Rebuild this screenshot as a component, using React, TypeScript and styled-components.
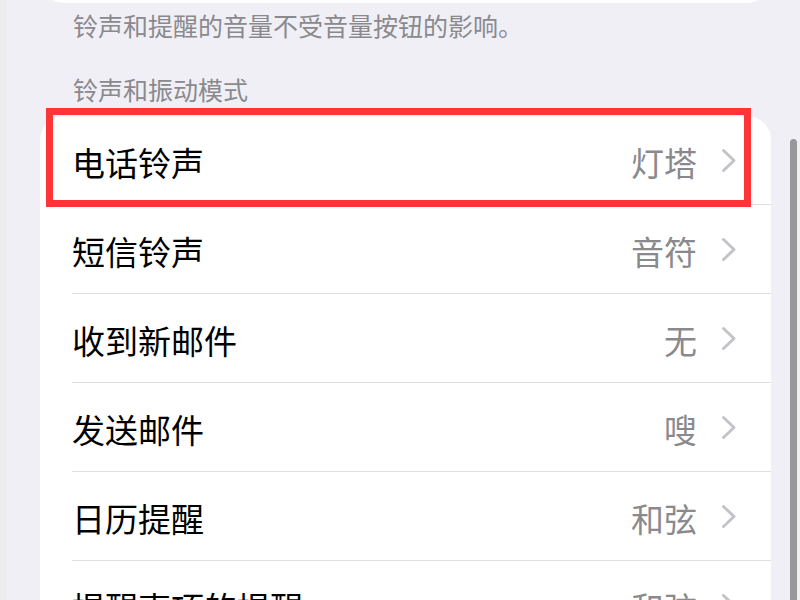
import styled, { createGlobalStyle } from "styled-components"

const GlobalStyle = createGlobalStyle`
  html, body {
    margin     : 0 ;
    padding    : 0 ;
    background : #f0eff5 ;
  }
  body {
    font-family : "Noto Sans CJK SC", "Noto Sans", sans-serif ;
  }
`

const Page = styled.div`
  width      : 800px    ;
  height     : 600px    ;
  display    : flex     ;
  overflow   : hidden   ;
  background : #f0eff5  ;
`

const EdgeStrip = styled.div`
  width      : 7px      ;
  flex       : none     ;
  background : #ededef  ;
`

const Main = styled.div`
  width          : 764px   ;
  flex           : none    ;
  padding-left   : 33px    ;
  box-sizing     : border-box ;
  display        : block   ;
`

const TopCard = styled.div`
  height        : 60px   ;
  margin-top    : -57px  ;
  background    : #ffffff ;
  border-radius : 0 0 24px 24px ;
`

const FooterText = styled.div`
  margin-top   : 6px     ;
  padding-left : 33px    ;
  font-size    : 25px    ;
  line-height  : 32px    ;
  color        : #8a8a8e ;
`

const SectionHeader = styled.div`
  margin-top   : 32px    ;
  padding-left : 33px    ;
  font-size    : 25px    ;
  line-height  : 32px    ;
  color        : #8a8a8e ;
`

const Card = styled.div`
  margin-top    : 11px    ;
  background    : #ffffff ;
  border-radius : 24px 24px 0 0 ;
`

const Row = styled.div`
  position     : relative ;
  padding-left : 32px     ;
`

const RowBody = styled.div`
  height          : 88px    ;
  padding-right   : 34px    ;
  border-bottom   : 1px solid #dedee2 ;
  display         : flex    ;
  align-items     : center  ;
  justify-content : space-between ;
`

const Label = styled.span`
  font-size   : 33px    ;
  line-height : 40px    ;
  margin-top  : 3px     ;
  color       : #000000 ;
`

const Detail = styled.div`
  display     : flex   ;
  align-items : center ;
  gap         : 24px   ;
`

const Value = styled.span`
  font-size   : 33px    ;
  line-height : 40px    ;
  margin-top  : 3px     ;
  color       : #8a8a8e ;
`

const Highlight = styled.div`
  position   : absolute ;
  top        : -8px     ;
  left       : 6px      ;
  right      : 20px     ;
  bottom     : -2px     ;
  border     : 7px solid #fd3438 ;
  pointer-events : none ;
`

const ScrollTrack = styled.div`
  flex         : 1     ;
  padding-left : 19px  ;
  padding-top  : 139px ;
`

const ScrollThumb = styled.div`
  width         : 7px     ;
  height        : 500px   ;
  border-radius : 4px     ;
  background    : #98989b ;
`

const Chevron = () => (
  <svg width="16" height="25" viewBox="0 0 16 25">
    <polyline points="2.5,2.5 13,12.5 2.5,22.5" fill="none" stroke="#c4c4c8" strokeWidth="3" strokeLinecap="round" strokeLinejoin="round" />
  </svg>
)

const rows = [
  { label: "电话铃声", value: "灯塔" },
  { label: "短信铃声", value: "音符" },
  { label: "收到新邮件", value: "无" },
  { label: "发送邮件", value: "嗖" },
  { label: "日历提醒", value: "和弦" },
  { label: "提醒事项的提醒", value: "和弦" },
]

export default function App() {
  return (
    <Page>
      <GlobalStyle />
      <EdgeStrip />
      <Main>
        <TopCard />
        <FooterText>铃声和提醒的音量不受音量按钮的影响。</FooterText>
        <SectionHeader>铃声和振动模式</SectionHeader>
        <Card>
          {rows.map((r, i) => (
            <Row key={i}>
              <RowBody>
                <Label>{r.label}</Label>
                <Detail>
                  <Value>{r.value}</Value>
                  <Chevron />
                </Detail>
              </RowBody>
              {i === 0 && <Highlight />}
            </Row>
          ))}
        </Card>
      </Main>
      <ScrollTrack>
        <ScrollThumb />
      </ScrollTrack>
    </Page>
  )
}
